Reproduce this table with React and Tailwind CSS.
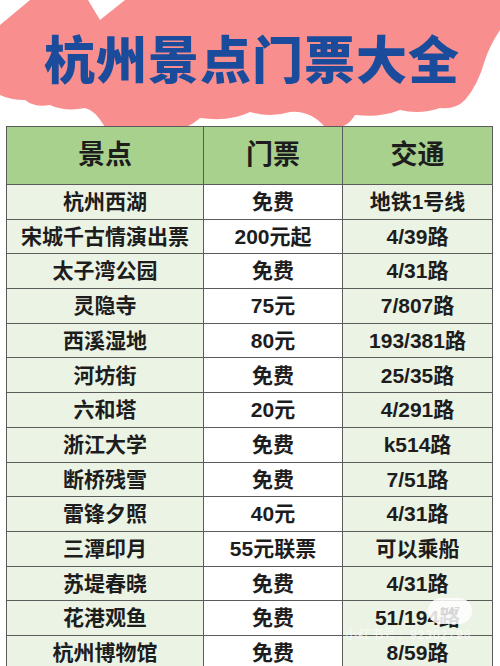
const rows = [
  ["杭州西湖", "免费", "地铁1号线"],
  ["宋城千古情演出票", "200元起", "4/39路"],
  ["太子湾公园", "免费", "4/31路"],
  ["灵隐寺", "75元", "7/807路"],
  ["西溪湿地", "80元", "193/381路"],
  ["河坊街", "免费", "25/35路"],
  ["六和塔", "20元", "4/291路"],
  ["浙江大学", "免费", "k514路"],
  ["断桥残雪", "免费", "7/51路"],
  ["雷锋夕照", "40元", "4/31路"],
  ["三潭印月", "55元联票", "可以乘船"],
  ["苏堤春晓", "免费", "4/31路"],
  ["花港观鱼", "免费", "51/194路"],
  ["杭州博物馆", "免费", "8/59路"],
];

const font = { fontFamily: '"Liberation Sans", "Noto Sans CJK SC", sans-serif' };

function Blob() {
  return (
    <svg className="absolute left-0 top-0" width="500" height="134" viewBox="0 0 500 134">
      <path
        fill="#f98e8e"
        d="M30,0 L88,0 L100,20 L125,0 L500,0 L500,30 Q490,45 485,60 Q478,85 465,100 Q455,110 440,108 Q420,115 400,110 Q380,118 355,115 Q345,132 325,127 Q310,110 290,112 Q270,118 250,112 Q230,122 200,118 Q185,132 165,130 Q150,132 140,127 Q125,135 105,127 Q95,110 85,108 Q65,112 50,105 Q35,108 25,100 Q10,100 0,95 L0,25 Z"
      />
    </svg>
  );
}

export default function App() {
  return (
    <div className="w-[500px] h-[666px] overflow-hidden bg-white relative" style={font}>
      {/* Title */}
      <div className="relative h-[126px]">
        <Blob />
        <h1 className="relative pt-[31px] pl-[4px] text-center text-[51px] leading-[62px] font-black tracking-[1px] text-[#1b4c9c]">
          杭州景点门票大全
        </h1>
      </div>

      {/* Table */}
      <div className="relative ml-[6px] w-[487px] border-l-[1.5px] border-t-[1.5px] border-[#5b5b5b] text-[#1d1d1d]">
        <div className="grid grid-cols-[197px_139px_150px] h-[58px] bg-[#a9d18e] text-[27px] font-bold">
          {["景点", "门票", "交通"].map((h) => (
            <div key={h} className="flex items-center justify-center border-r-[1.5px] border-b-[1.5px] border-[#5b5b5b]">
              {h}
            </div>
          ))}
        </div>
        {rows.map((r, i) => (
          <div key={i} className="grid grid-cols-[197px_139px_150px] h-[34.7px] text-[21px] font-semibold">
            <div className="flex items-center justify-center bg-[#ebf3e4] border-r-[1.5px] border-b-[1.5px] border-[#5b5b5b]">{r[0]}</div>
            <div className="flex items-center justify-center bg-white border-r-[1.5px] border-b-[1.5px] border-[#5b5b5b]">{r[1]}</div>
            <div className="flex items-center justify-center bg-[#ebf3e4] border-r-[1.5px] border-b-[1.5px] border-[#5b5b5b]">{r[2]}</div>
          </div>
        ))}
      </div>

      {/* Watermark overlay */}
      <div className="absolute left-[428px] top-[598px] w-[44px] h-[26px] rounded-full bg-white/85 flex items-center justify-center text-[10px] text-[#d0d0d0]">
        1/47
      </div>
      <div className="absolute left-[345px] top-[628px] text-[12px] leading-[14px] text-white/70 tracking-[1px]">
        小红书号：92302798
      </div>
    </div>
  );
}
